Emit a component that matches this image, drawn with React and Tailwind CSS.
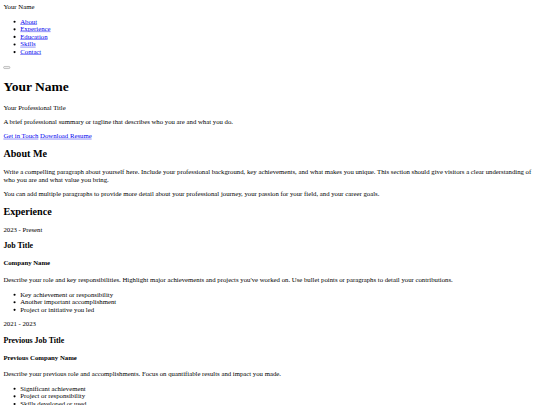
import React from "react";

function A({ children }) {
  return (
    <a href="#" className="text-[#0000ee] underline">
      {children}
    </a>
  );
}

function Job({ period, title, company, desc, items }) {
  return (
    <div>
      <p className="my-4">{period}</p>
      <h3 className="text-[18.72px] font-bold my-[18.72px]">{title}</h3>
      <h4 className="text-[16px] font-bold my-[21.28px]">{company}</h4>
      <p className="my-4">{desc}</p>
      <ul className="my-4 pl-10 list-disc">
        {items.map((it) => (
          <li key={it}>{it}</li>
        ))}
      </ul>
    </div>
  );
}

export default function App() {
  return (
    <div className="w-[540px] h-[405px] overflow-hidden bg-white">
      <div className="w-[1280px] origin-top-left scale-[0.421875] bg-white text-black font-['Liberation_Serif','Times_New_Roman',serif] text-[16px] leading-[normal]">
        <div className="p-2">
          <header>
            <div>Your Name</div>
            <nav>
              <ul className="my-4 pl-10 list-disc">
                <li><A>About</A></li>
                <li><A>Experience</A></li>
                <li><A>Education</A></li>
                <li><A>Skills</A></li>
                <li><A>Contact</A></li>
              </ul>
            </nav>
            <div>
              <button
                type="button"
                aria-label="Menu"
                className="inline-block align-baseline w-[16px] h-[6px] bg-[#efefef] border border-[#767676] rounded-[3px]"
              ></button>
            </div>
          </header>
          <main>
            <section>
              <h1 className="text-[32px] font-bold my-[21.44px]">Your Name</h1>
              <p className="my-4">Your Professional Title</p>
              <p className="my-4">
                A brief professional summary or tagline that describes who you are and what you do.
              </p>
              <div>
                <A>Get in Touch</A> <A>Download Resume</A>
              </div>
            </section>
            <section>
              <h2 className="text-[24px] font-bold my-[19.92px]">About Me</h2>
              <p className="my-4">
                Write a compelling paragraph about yourself here. Include your professional background, key
                achievements, and what makes you unique. This section should give visitors a clear understanding of
                who you are and what value you bring.
              </p>
              <p className="my-4">
                You can add multiple paragraphs to provide more detail about your professional journey, your passion
                for your field, and your career goals.
              </p>
            </section>
            <section>
              <h2 className="text-[24px] font-bold my-[19.92px]">Experience</h2>
              <Job
                period="2023 - Present"
                title="Job Title"
                company="Company Name"
                desc="Describe your role and key responsibilities. Highlight major achievements and projects you've worked on. Use bullet points or paragraphs to detail your contributions."
                items={[
                  "Key achievement or responsibility",
                  "Another important accomplishment",
                  "Project or initiative you led",
                ]}
              />
              <Job
                period="2021 - 2023"
                title="Previous Job Title"
                company="Previous Company Name"
                desc="Describe your previous role and accomplishments. Focus on quantifiable results and impact you made."
                items={["Significant achievement", "Project or responsibility", "Skills developed or used"]}
              />
            </section>
          </main>
        </div>
      </div>
    </div>
  );
}
